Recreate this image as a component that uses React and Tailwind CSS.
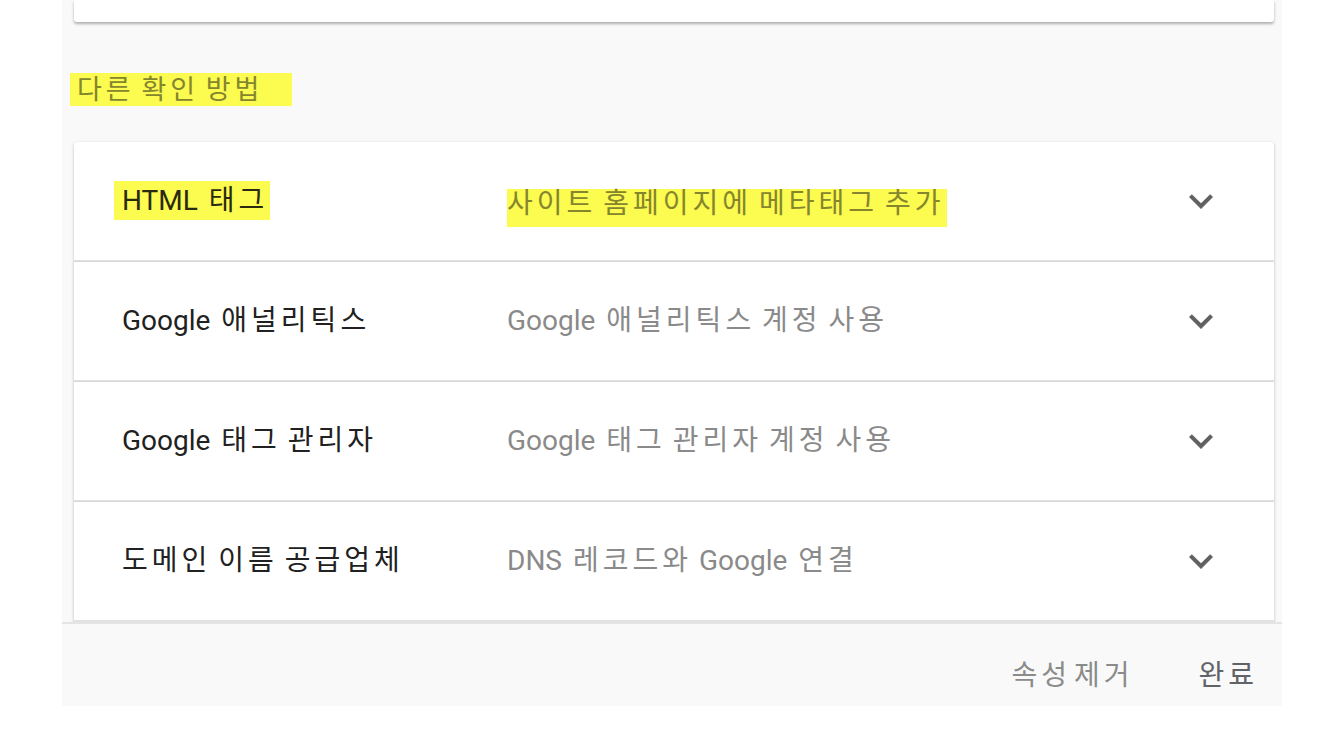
import React from 'react'

const font = { fontFamily: 'Roboto, "Noto Sans CJK KR", sans-serif' }

const methods = [
  { name: 'HTML 태그', desc: '사이트 홈페이지에 메타태그 추가', marked: true },
  { name: 'Google 애널리틱스', desc: 'Google 애널리틱스 계정 사용' },
  { name: 'Google 태그 관리자', desc: 'Google 태그 관리자 계정 사용' },
  { name: '도메인 이름 공급업체', desc: 'DNS 레코드와 Google 연결' },
]

// hangul runs get a bit of tracking so they sit as wide as the original font
function Ko({ children }) {
  return children.split(/([\uAC00-\uD7A3]+)/).map((part, i) =>
    /[\uAC00-\uD7A3]/.test(part) ? (
      <span key={i} className="tracking-[4px] mr-[-4px]">{part}</span>
    ) : (
      part
    )
  )
}

function ExpandMore() {
  return (
    <svg width="48" height="48" viewBox="0 0 24 24" className="text-[#616161]">
      <path fill="currentColor" d="M16.59 8.59L12 13.17 7.41 8.59 6 10l6 6 6-6z" />
    </svg>
  )
}

function MethodRow({ method, first }) {
  return (
    <div
      className={`flex items-center h-[120px] bg-white border-b-2 border-[#e2e2e2] shadow-[0_1px_3px_rgba(0,0,0,0.25)] ${first ? 'rounded-t-[3px]' : ''}`}
    >
      <div className="w-[433px] pl-[48px] text-[28px] text-[#212121] leading-none">
        {method.marked ? (
          <span className="bg-[#fbfb50] pl-[8px] pr-[6px] py-[3px] -ml-[8px] text-[#2a2a10]">
            <Ko>{method.name}</Ko>
          </span>
        ) : (
          <Ko>{method.name}</Ko>
        )}
      </div>
      <div className="flex-1 text-[28px] text-[#8a8a8a] leading-none">
        {method.marked ? (
          <span className="bg-[#fbfb50] inline-block pt-[1px] pb-[9px] pr-[6px] mt-[14px] text-[#85852e]">
            <Ko>{method.desc}</Ko>
          </span>
        ) : (
          <Ko>{method.desc}</Ko>
        )}
      </div>
      <div className="pr-[49px] flex items-center">
        <ExpandMore />
      </div>
    </div>
  )
}

export default function App() {
  return (
    <div className="w-full h-[744px] bg-white overflow-hidden whitespace-nowrap [word-spacing:4px]" style={font}>
      <div className="ml-[62px] w-[1220px] h-[706px] bg-[#f9f9f9] flex flex-col">
        {/* scrolling content */}
        <div className="flex-1 overflow-hidden pl-[12px] pr-[8px]">
          <div className="h-[22px] bg-white rounded-b-[3px] shadow-[0_2px_3px_rgba(0,0,0,0.3)]" />

          <div className="mt-[51px] -ml-[4px]">
            <span className="inline-block bg-[#fbfb50] h-[33px] w-[222px] pl-[7px] pt-[2px] text-[27px] leading-[30px] text-[#85852e]">
              <Ko>다른 확인 방법</Ko>
            </span>
          </div>

          <div className="mt-[36px]">
            {methods.map((m, i) => (
              <MethodRow key={m.name} method={m} first={i === 0} />
            ))}
          </div>
        </div>

        {/* footer */}
        <div className="h-[84px] border-t-2 border-[#e4e4e4] flex items-center justify-end pr-[28px] pt-[22px] gap-[69px]">
          <button className="text-[28px] text-[#8b8b8b] leading-none">
            <Ko>속성 제거</Ko>
          </button>
          <button className="text-[28px] text-[#5f6368] leading-none">
            <Ko>완료</Ko>
          </button>
        </div>
      </div>
    </div>
  )
}
